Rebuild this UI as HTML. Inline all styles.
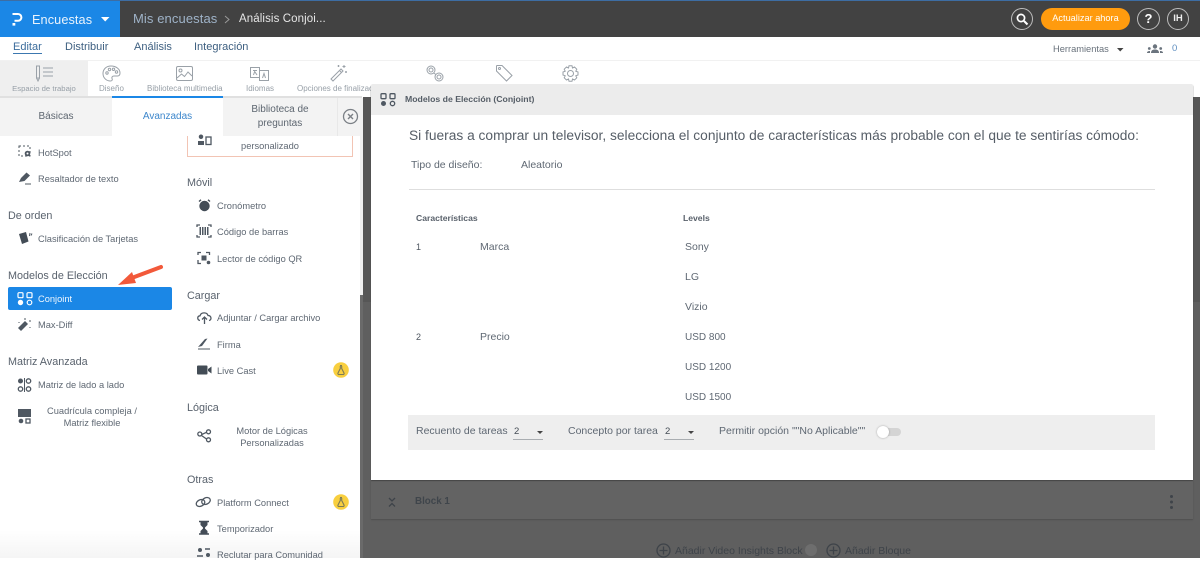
<!DOCTYPE html>
<html lang="es"><head><meta charset="utf-8"><title>Encuestas</title>
<style>
html,body{margin:0;padding:0}
body{width:1200px;height:558px;position:relative;overflow:hidden;background:#fff;font-family:"Liberation Sans",sans-serif;color:#5e6670}
.a{position:absolute}
.t{position:absolute;white-space:nowrap;font-size:9.3px;color:#5f6873;line-height:14px}
.m{position:absolute;white-space:nowrap;font-size:10.5px;color:#5f6873;line-height:14px}
.c{text-align:center}
.h{position:absolute;white-space:nowrap;font-size:10.8px;color:#59626d;line-height:14px}
svg{position:absolute;overflow:visible}
.i{fill:none;stroke:#4f5862;stroke-width:1.3}
.f{fill:#4f5862;stroke:none}
.g{fill:none;stroke:#9aa1a8;stroke-width:1}
.l{position:absolute;white-space:nowrap;font-size:8px;color:#98a0a8;line-height:12px}
</style></head><body>

<!-- top bar -->
<div class="a" style="left:0;top:0;width:1200px;height:37px;background:#424242;border-top:1px solid #3d6da3;box-sizing:border-box"></div>
<div class="a" style="left:0;top:1px;width:120px;height:36px;background:#1b87e6"></div>
<svg style="left:12px;top:13px" width="12" height="13" viewBox="0 0 12 13"><path d="M0.500 1H6A3.400 3.400 0 0 1 6 7.800H2.500" fill="none" stroke="#fff" stroke-width="2"/><rect x="0.500" y="10" width="2.800" height="2.600" fill="#fff"/></svg>
<div class="t" style="left:32px;top:12px;font-size:12.700px;color:#eaf3fc;line-height:16px;letter-spacing:.1px">Encuestas</div>
<svg style="left:101px;top:17px" width="9" height="5"><path d="M0 0H8.500L4.200 4.500Z" fill="#fff"/></svg>
<div class="t" style="left:133px;top:11px;font-size:13px;color:#9fb3c8;line-height:16px;letter-spacing:.1px">Mis encuestas</div>
<svg style="left:224px;top:15px" width="6" height="9"><path d="M1 1L5 4.500L1 8" fill="none" stroke="#9a9a9a" stroke-width="1"/></svg>
<div class="t" style="left:239px;top:12px;font-size:11.500px;color:#e6e6e6;line-height:15px;letter-spacing:.1px">Análisis Conjoi...</div>
<div class="a" style="left:1011px;top:8px;width:20px;height:20px;border:1px solid #bdbdbd;border-radius:50%"></div>
<svg style="left:1016px;top:13px" width="13" height="13"><circle cx="5" cy="5" r="3.600" fill="none" stroke="#fff" stroke-width="1.700"/><path d="M8 8L11.500 11.500" stroke="#fff" stroke-width="2"/></svg>
<div class="a" style="left:1041px;top:8px;width:89px;height:22px;background:#ff9b0e;border-radius:11px;color:#fff;font-size:9.200px;line-height:21px;text-align:center">Actualizar ahora</div>
<div class="a" style="left:1137px;top:8px;width:21px;height:20px;border:1px solid #bdbdbd;border-radius:50%;color:#fff;font-size:13px;font-weight:bold;line-height:20px;text-align:center">?</div>
<div class="a" style="left:1167px;top:8px;width:20px;height:20px;border:1px solid #bdbdbd;border-radius:50%;color:#eee;font-size:9.500px;font-weight:bold;line-height:20px;text-align:center">IH</div>

<!-- nav -->
<div class="t" style="left:13px;top:42px;font-size:11px;color:#3c6d9c;border-bottom:1px solid #3c78b0;line-height:11px">Editar</div>
<div class="t" style="left:65px;top:42px;font-size:11px;color:#3d5f80;line-height:11px">Distribuir</div>
<div class="t" style="left:134px;top:42px;font-size:11px;color:#3d5f80;line-height:11px">Análisis</div>
<div class="t" style="left:194px;top:42px;font-size:11px;color:#3d5f80;line-height:11px">Integración</div>
<div class="t" style="left:1053px;top:42px;font-size:9.300px;color:#68717b;line-height:14px">Herramientas</div>
<svg style="left:1117px;top:48px" width="7" height="4"><path d="M0 0H6.500L3.200 3.500Z" fill="#444"/></svg>
<svg style="left:1147px;top:44px" width="16" height="10"><circle cx="8" cy="2.500" r="2.200" fill="#6b747e"/><path d="M4 9C4 6 6 5.500 8 5.500S12 6 12 9Z" fill="#6b747e"/><circle cx="2.300" cy="4.500" r="1.400" fill="#6b747e"/><circle cx="13.700" cy="4.500" r="1.400" fill="#6b747e"/><path d="M0 9C0 7.500 1 7 3 7V9ZM16 9C16 7.500 15 7 13 7V9Z" fill="#6b747e"/></svg>
<div class="t" style="left:1172px;top:42px;font-size:9.500px;color:#5f8fc0">0</div>

<!-- toolbar -->
<div class="a" style="left:0;top:60px;width:1200px;height:1px;background:#f1f1f1"></div>
<div class="a" style="left:0;top:61px;width:88px;height:35px;background:#efefef"></div>
<svg style="left:35px;top:65px" width="20" height="17"><rect x="1.500" y="1" width="3" height="12" class="g"/><path d="M1.500 13L3 16L4.500 13" class="g"/><path d="M8 3H18M8 7H18M8 11H18" class="g"/></svg>
<svg style="left:102px;top:65px" width="19" height="17"><path d="M9 1C4 1 1 4.500 1 8.500C1 13 4.500 16 8.500 16C10.500 16 10.500 14.500 10 13.500C9.500 12 10.500 11 12 11H15.500C17 11 18 10 18 8C18 4 14 1 9 1Z" class="g"/><circle cx="5" cy="8" r="1.200" class="g"/><circle cx="7.500" cy="4.500" r="1.200" class="g"/><circle cx="11.500" cy="4.300" r="1.200" class="g"/><circle cx="14.500" cy="7" r="1.200" class="g"/></svg>
<svg style="left:176px;top:66px" width="17" height="15"><rect x="0.500" y="0.500" width="16" height="14" rx="1.500" class="g"/><circle cx="4.500" cy="4.500" r="1.500" class="g"/><path d="M1 12L5.500 8L8.500 10.500L12 6L16 10" class="g"/></svg>
<svg style="left:250px;top:67px" width="19" height="14"><rect x="0.500" y="0.500" width="9" height="10" class="g"/><rect x="9.500" y="3.500" width="9" height="10" class="g"/><path d="M3 3.500H7M5 3.500L3.500 8M5 5L7 8" class="g" stroke-width=".7"/><path d="M12.500 11L14 6.500L15.500 11" class="g" stroke-width=".7"/></svg>
<svg style="left:330px;top:64px" width="18" height="18"><path d="M1 15L11 5L13 7L3 17Z" class="g"/><path d="M9.500 6.500L11.500 8.500" class="g"/><path d="M14 1V4M12.500 2.500H15.500M16 7V9M15 8H17M8.500 1V3M7.500 2H9.500" class="g"/></svg>
<svg style="left:426px;top:65px" width="18" height="17"><circle cx="5" cy="5" r="4" class="g"/><circle cx="13" cy="12" r="4" class="g"/><circle cx="5" cy="5" r="2" class="g"/><circle cx="13" cy="12" r="2" class="g"/><path d="M7.500 8L10 9.500" class="g"/></svg>
<svg style="left:496px;top:65px" width="17" height="17"><path d="M0.500 1V6L10.500 16L16 10.500L6 0.500H1Z" class="g"/><circle cx="3.500" cy="3.500" r="1" class="g"/></svg>
<svg style="left:562px;top:65px" width="17" height="17"><circle cx="8.500" cy="8.500" r="3" class="g"/><path d="M7 .8H10L10.500 3L12.500 2L14.800 4.200L13.800 6.200L16 7V10L13.800 10.800L14.800 12.800L12.500 15L10.500 14L10 16.200H7L6.500 14L4.500 15L2.200 12.800L3.200 10.800L1 10V7L3.200 6.200L2.200 4.200L4.500 2L6.500 3Z" class="g"/></svg>
<div class="l" style="left:0;top:83px;width:88px;text-align:center;font-size:7.700px">Espacio de trabajo</div>
<div class="l" style="left:99px;top:83px">Diseño</div>
<div class="l" style="left:147px;top:83px">Biblioteca multimedia</div>
<div class="l" style="left:246px;top:83px">Idiomas</div>
<div class="l" style="left:297px;top:83px;width:74px;overflow:hidden">Opciones de finalización</div>

<!-- left panel tabs -->
<div class="a" style="left:0;top:96px;width:362px;height:2px;background:#e0e0e0"></div>
<div class="a" style="left:0;top:98px;width:360px;height:38px;background:#f3f3f3"></div>
<div class="a" style="left:112px;top:96px;width:111px;height:2px;background:#1b87e6"></div>
<div class="a" style="left:112px;top:98px;width:111px;height:38px;background:#fff"></div>
<div class="t" style="left:0;top:110px;width:112px;text-align:center;font-size:10px;color:#5d6670">Básicas</div>
<div class="t" style="left:112px;top:110px;width:111px;text-align:center;font-size:10px;color:#3d87cc">Avanzadas</div>
<div class="t" style="left:235px;top:103px;width:90px;text-align:center;font-size:10px;line-height:14px;white-space:normal;color:#5d6670">Biblioteca de preguntas</div>
<div class="a" style="left:337px;top:98px;width:1px;height:38px;background:#e8e8e8"></div>
<svg style="left:342px;top:108px" width="17" height="17"><circle cx="8.500" cy="8.500" r="7" fill="none" stroke="#7b8086" stroke-width="1.300"/><path d="M6 6L11 11M11 6L6 11" stroke="#7b8086" stroke-width="1.400"/></svg>

<div class="a" style="left:0;top:530px;width:360px;height:28px;background:linear-gradient(rgba(255,255,255,0),rgba(238,238,238,.6))"></div>

<!-- left panel col 1 -->
<svg style="left:18px;top:145px" width="13" height="13"><rect x="1" y="1" width="11" height="10" fill="none" stroke="#4f5862" stroke-dasharray="2 2"/><circle cx="9.500" cy="8.500" r="2.800" fill="#4f5862"/><circle cx="9.500" cy="8.500" r="1" fill="#fff"/></svg>
<div class="t" style="left:38px;top:146px">HotSpot</div>
<svg style="left:18px;top:171px" width="14" height="14"><path d="M1 11L3 7L8.500 1.500L12 4.500L6.500 10Z" fill="#4f5862"/><path d="M7 13H13" stroke="#4f5862"/></svg>
<div class="t" style="left:38px;top:172px">Resaltador de texto</div>
<div class="h" style="left:8px;top:209px">De orden</div>
<svg style="left:17px;top:231px" width="16" height="14"><path d="M2 3L9 1L11.500 10.500L5 13Z" fill="#434c56"/><path d="M13 2L12.500 5M15 2.500L14 4.500" stroke="#4f5862"/></svg>
<div class="t" style="left:38px;top:232px">Clasificación de Tarjetas</div>
<div class="h" style="left:8px;top:269px">Modelos de Elección</div>
<div class="a" style="left:8px;top:287px;width:164px;height:23px;background:#1b87e6;border-radius:2px"></div>
<svg style="left:17px;top:292px" width="16" height="14"><rect x="1" y="0.700" width="5" height="5" rx="1" fill="none" stroke="#fff" stroke-width="1.200"/><rect x="10" y="0.700" width="5" height="5" rx="1" fill="none" stroke="#fff" stroke-width="1.200"/><circle cx="3.500" cy="10.500" r="2.700" fill="#fff"/><circle cx="12.500" cy="10.500" r="2.300" fill="none" stroke="#fff" stroke-width="1.200"/></svg>
<div class="t" style="left:38px;top:292px;color:#f0f7fe">Conjoint</div>
<svg style="left:17px;top:317px" width="15" height="15"><path d="M1 11L8 4L11 7L4 14Z" fill="#4f5862"/><path d="M8 1V3M13 3V5M2 5V6M13 10V11" stroke="#4f5862"/></svg>
<div class="t" style="left:38px;top:318px">Max-Diff</div>
<div class="h" style="left:8px;top:355px">Matriz Avanzada</div>
<svg style="left:17px;top:378px" width="15" height="14"><circle cx="3.500" cy="3" r="2.500" fill="#4f5862"/><circle cx="3.500" cy="11" r="2.200" class="i"/><circle cx="11.500" cy="3" r="2.200" class="i"/><circle cx="11.500" cy="11" r="2.200" class="i"/><path d="M7.500 0V14" stroke="#4f5862"/></svg>
<div class="t" style="left:38px;top:378px">Matriz de lado a lado</div>
<svg style="left:18px;top:409px" width="14" height="15"><rect x="0" y="0" width="13" height="8" fill="#4f5862"/><circle cx="3" cy="12" r="2.300" fill="#4f5862"/><rect x="8" y="10" width="4" height="4" class="i"/></svg>
<div class="t c" style="left:18px;top:404px;width:148px">Cuadrícula compleja /</div>
<div class="t c" style="left:18px;top:416px;width:148px">Matriz flexible</div>

<!-- left panel col 2 -->
<div class="a" style="left:187px;top:136px;width:166px;height:21px;border:1px solid #f2c4b4;border-top:0;box-sizing:border-box"></div>
<svg style="left:198px;top:134px" width="14" height="12"><path d="M0 11V7H6V11ZM3 0.500A2 2 0 0 1 3 5A2 2 0 0 1 3 .5Z" fill="#4f5862"/><rect x="8" y="3" width="5" height="7.500" class="i"/></svg>
<div class="t c" style="left:187px;top:139px;width:166px">personalizado</div>
<div class="h" style="left:187px;top:176px">Móvil</div>
<svg style="left:198px;top:199px" width="13" height="13"><circle cx="6.500" cy="7" r="5.200" fill="#434c56"/><path d="M1 2.500L3 .8M12 2.500L10 .8" stroke="#434c56" stroke-width="1.400"/></svg>
<div class="t" style="left:217px;top:199px">Cronómetro</div>
<svg style="left:196px;top:224px" width="16" height="14"><path d="M1 3V1H4M12 1H15V3M1 11V13H4M12 13H15V11" class="i"/><path d="M3.500 3H12.500V11H3.500Z" fill="#4f5862"/><path d="M5.500 3V11M8 3V11M10.500 3V11" stroke="#fff"/></svg>
<div class="t" style="left:217px;top:225px">Código de barras</div>
<svg style="left:197px;top:251px" width="14" height="14"><path d="M1 4V1.500H4M9 1.500H12.500V4M1 9V12.500H4" class="i"/><rect x="4.500" y="4.500" width="5" height="5" fill="#4f5862"/><circle cx="11.500" cy="11.500" r="1.800" fill="#4f5862"/></svg>
<div class="t" style="left:217px;top:252px">Lector de código QR</div>
<div class="h" style="left:187px;top:289px">Cargar</div>
<svg style="left:197px;top:311px" width="15" height="14"><path d="M3 9.500C0 9 0 5 3 4.800C4 1 10 1 11 4.500C14.500 4.500 15 9 12 9.500" class="i"/><path d="M7.500 13V6M5 8.500L7.500 6L10 8.500" class="i"/></svg>
<div class="t" style="left:217px;top:311px">Adjuntar / Cargar archivo</div>
<svg style="left:197px;top:337px" width="15" height="13"><path d="M1 10L8 2L10.500 1.500L5 9Z" fill="#4f5862"/><path d="M1 12H13" stroke="#4f5862"/></svg>
<div class="t" style="left:217px;top:338px">Firma</div>
<svg style="left:197px;top:365px" width="15" height="10"><rect x="0" y="0.500" width="10.500" height="9" rx="1" fill="#434c56"/><path d="M11 4L14.500 1.500V8.500L11 6Z" fill="#434c56"/></svg>
<div class="t" style="left:217px;top:364px">Live Cast</div>
<svg style="left:333px;top:362px" width="16" height="16"><circle cx="8" cy="8" r="7.800" fill="#f8cf3f"/><path d="M7 3.500H9M7.300 4V6.500L5 11A1 1 0 0 0 6 12.500H10A1 1 0 0 0 11 11L8.700 6.500V4" fill="none" stroke="#7c7a55" stroke-width="1.100"/></svg>
<div class="h" style="left:187px;top:401px">Lógica</div>
<svg style="left:197px;top:429px" width="15" height="14"><circle cx="2.800" cy="5" r="2" class="i"/><circle cx="11.500" cy="2.800" r="2" class="i"/><circle cx="11.500" cy="10.800" r="2" class="i"/><path d="M4.800 5.500L9.500 3.300M4.500 6.500L9.500 10" class="i"/></svg>
<div class="t c" style="left:212px;top:424px;width:120px">Motor de Lógicas</div>
<div class="t c" style="left:212px;top:436px;width:120px">Personalizadas</div>
<div class="h" style="left:187px;top:473px">Otras</div>
<svg style="left:195px;top:496px" width="17" height="12"><ellipse cx="5.500" cy="7" rx="4.500" ry="3.200" transform="rotate(-25 5.500 7)" class="i"/><ellipse cx="11" cy="5" rx="4.500" ry="3.200" transform="rotate(-25 11 5)" class="i"/></svg>
<div class="t" style="left:217px;top:496px">Platform Connect</div>
<svg style="left:333px;top:494px" width="16" height="16"><circle cx="8" cy="8" r="7.800" fill="#f8cf3f"/><path d="M7 3.500H9M7.300 4V6.500L5 11A1 1 0 0 0 6 12.500H10A1 1 0 0 0 11 11L8.700 6.500V4" fill="none" stroke="#7c7a55" stroke-width="1.100"/></svg>
<svg style="left:199px;top:521px" width="11" height="14"><path d="M0 .5H10M0 13H10" stroke="#434c56" stroke-width="1.400"/><path d="M1.500 1H8.500V4L6 6.500V7.500L8.500 10V13H1.500V10L4 7.500V6.500L1.500 4Z" fill="#434c56"/></svg>
<div class="t" style="left:217px;top:522px">Temporizador</div>
<svg style="left:197px;top:547px" width="15" height="11"><circle cx="3" cy="3" r="2" fill="#4f5862"/><circle cx="11" cy="8" r="2" fill="#4f5862"/><path d="M0 9H6M8 2H13" stroke="#4f5862" stroke-width="1.500"/></svg>
<div class="t" style="left:217px;top:548px">Reclutar para Comunidad</div>

<!-- scrollbars -->
<div class="a" style="left:360px;top:98px;width:3px;height:460px;background:#f0f0f0"></div>
<div class="a" style="left:360px;top:295px;width:3px;height:263px;background:#6a6a6a"></div>

<!-- dark overlay area -->
<div class="a" style="left:363px;top:97px;width:837px;height:461px;background:#5f5f5f"></div>
<div class="a" style="left:363px;top:97px;width:8px;height:205px;background:#565656"></div>
<div class="a" style="left:1193px;top:97px;width:7px;height:205px;background:#565656"></div>
<div class="a" style="left:371px;top:480px;width:822px;height:39px;background:#636363;box-shadow:0 1px 1px #505050"></div>
<svg style="left:388px;top:497px" width="8" height="11"><path d="M1 1L4 4L7 1M1 9.500L4 6.500L7 9.500" fill="none" stroke="#3e4349" stroke-width="1.300"/></svg>
<div class="t" style="left:415px;top:495px;font-size:9.800px;font-weight:bold;color:#3f454b">Block 1</div>
<div class="a" style="left:1170px;top:495px;width:3px;height:3px;border-radius:50%;background:#3e4349;box-shadow:0 5.500px 0 #3e4349,0 11px 0 #3e4349"></div>
<svg style="left:656px;top:543px" width="15" height="15"><circle cx="7.500" cy="7.500" r="6.500" fill="none" stroke="#3e4349" stroke-width="1.300"/><path d="M7.500 3.500V11.500M3.500 7.500H11.500" stroke="#3e4349" stroke-width="1.300"/></svg>
<div class="m" style="left:675px;top:544px;color:#3e4349">Añadir Video Insights Block</div>
<div class="a" style="left:805px;top:544px;width:12px;height:12px;border-radius:50%;background:#6e6e6e"></div>
<svg style="left:826px;top:543px" width="15" height="15"><circle cx="7.500" cy="7.500" r="6.500" fill="none" stroke="#3e4349" stroke-width="1.300"/><path d="M7.500 3.500V11.500M3.500 7.500H11.500" stroke="#3e4349" stroke-width="1.300"/></svg>
<div class="m" style="left:845px;top:544px;color:#3e4349">Añadir Bloque</div>

<!-- modal -->
<div class="a" style="left:371px;top:84px;width:822px;height:396px;background:#fff;box-shadow:0 1px 1px #444;border-radius:2px 2px 0 0"></div>
<div class="a" style="left:371px;top:84px;width:822px;height:31px;background:#ececec;border-radius:2px 2px 0 0"></div>
<svg style="left:380px;top:93px" width="16" height="14"><rect x="1" y="0.700" width="5" height="5" rx="1" class="i"/><rect x="10" y="0.700" width="5" height="5" rx="1" class="i"/><circle cx="3.500" cy="10.500" r="2.500" fill="#4f5862"/><circle cx="12.500" cy="10.500" r="2.200" class="i"/></svg>
<div class="t" style="left:405px;top:92px;font-size:8.700px;font-weight:bold;color:#555d66">Modelos de Elección (Conjoint)</div>
<div class="t" style="left:409px;top:127px;font-size:13.760px;line-height:18px;color:#565e67">Si fueras a comprar un televisor, selecciona el conjunto de características más probable con el que te sentirías cómodo:</div>
<div class="m" style="left:411px;top:158px">Tipo de diseño:</div>
<div class="m" style="left:521px;top:158px">Aleatorio</div>
<div class="a" style="left:409px;top:189px;width:746px;height:1px;background:#dedede"></div>
<div class="t" style="left:416px;top:211px;font-size:8.600px;font-weight:bold;color:#59616b">Características</div>
<div class="t" style="left:683px;top:211px;font-size:8.600px;font-weight:bold;color:#59616b">Levels</div>
<div class="t" style="left:416px;top:240px;font-size:9px;color:#4e5660">1</div>
<div class="m" style="left:480px;top:240px">Marca</div>
<div class="m" style="left:685px;top:240px">Sony</div>
<div class="m" style="left:685px;top:270px">LG</div>
<div class="m" style="left:685px;top:300px">Vizio</div>
<div class="t" style="left:416px;top:330px;font-size:9px;color:#4e5660">2</div>
<div class="m" style="left:480px;top:330px">Precio</div>
<div class="m" style="left:685px;top:331px;font-size:10px">USD 800</div>
<div class="m" style="left:685px;top:361px;font-size:10px">USD 1200</div>
<div class="m" style="left:685px;top:391px;font-size:10px">USD 1500</div>
<div class="a" style="left:408px;top:415px;width:747px;height:35px;background:#eeeeee"></div>
<div class="m" style="left:416px;top:424px">Recuento de tareas</div>
<div class="t" style="left:514px;top:425px;font-size:9.500px;color:#444c55">2</div>
<svg style="left:537px;top:431px" width="6" height="3"><path d="M0 0H6L3 3Z" fill="#444"/></svg>
<div class="a" style="left:513px;top:439px;width:30px;height:1px;background:#a9adb1"></div>
<div class="m" style="left:568px;top:424px">Concepto por tarea</div>
<div class="t" style="left:665px;top:425px;font-size:9.500px;color:#444c55">2</div>
<svg style="left:688px;top:431px" width="6" height="3"><path d="M0 0H6L3 3Z" fill="#444"/></svg>
<div class="a" style="left:664px;top:439px;width:30px;height:1px;background:#a9adb1"></div>
<div class="m" style="left:719px;top:424px">Permitir opción ""No Aplicable""</div>
<div class="a" style="left:878px;top:428px;width:23px;height:8px;border-radius:4px;background:#d4d4d4"></div>
<div class="a" style="left:877px;top:426px;width:12px;height:12px;border-radius:50%;background:#fff;box-shadow:0 0 2px rgba(0,0,0,.3)"></div>

<!-- arrow annotation -->
<svg style="left:116px;top:264px" width="48" height="26"><path d="M45 3L13 15" stroke="#f2593a" stroke-width="4" stroke-linecap="round"/><path d="M2 21L16 8L20 19Z" fill="#f2593a"/></svg>

</body></html>
